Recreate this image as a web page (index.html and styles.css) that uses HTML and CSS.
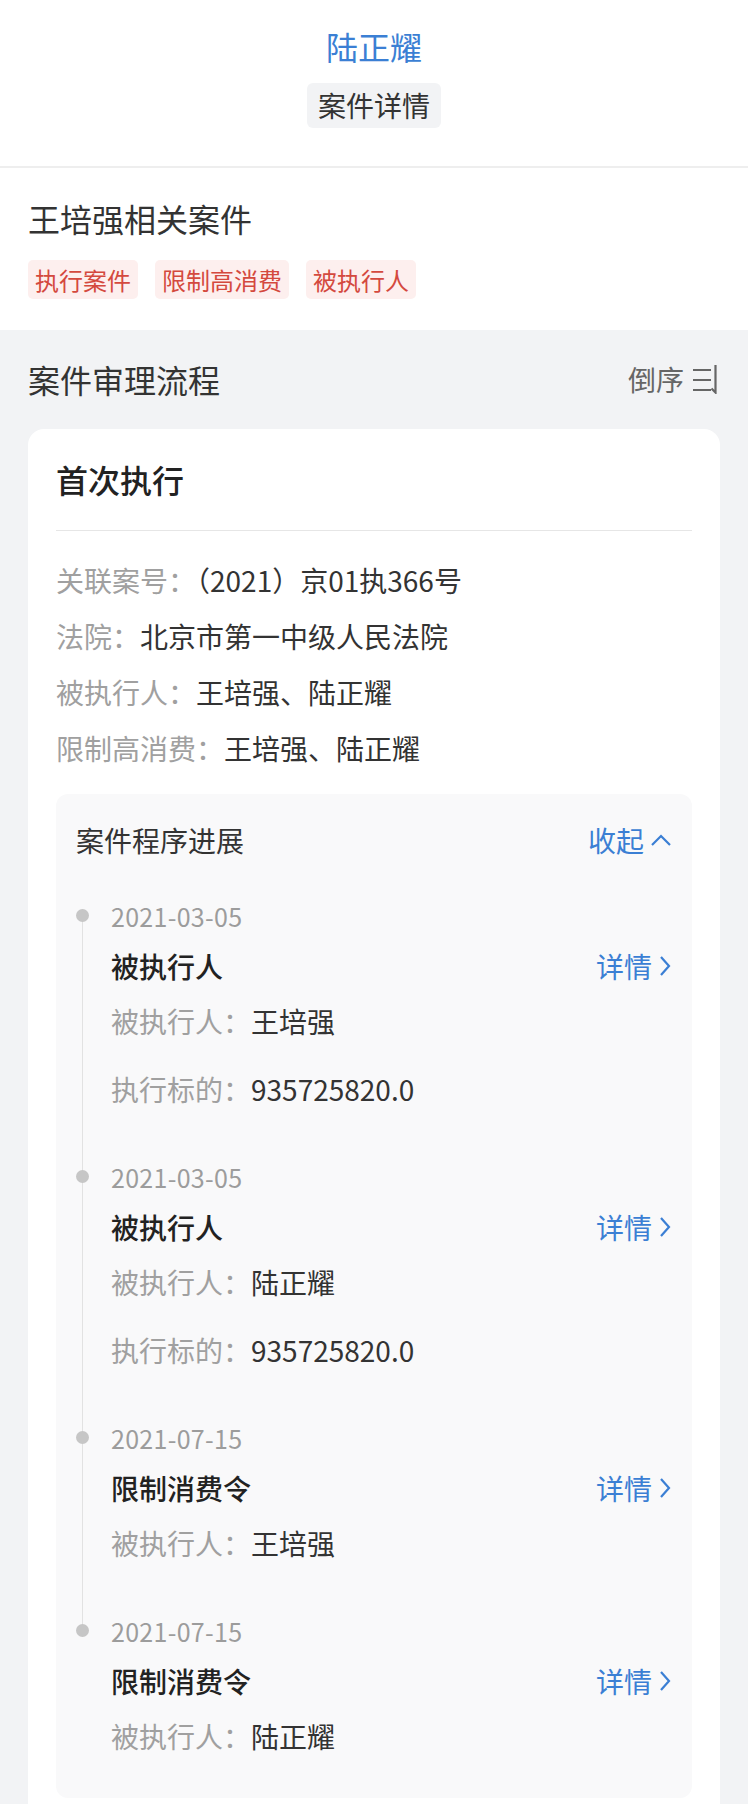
FILE: index.html
```html
<!DOCTYPE html>
<html lang="zh-CN">
<head>
<meta charset="utf-8">
<title>案件详情</title>
<link rel="stylesheet" href="styles.css">
</head>
<body>
<header class="top">
  <div class="person">陆正耀</div>
  <div class="badge">案件详情</div>
</header>

<section class="related">
  <h2 class="related-title">王培强相关案件</h2>
  <div class="tags">
    <span class="tag">执行案件</span>
    <span class="tag">限制高消费</span>
    <span class="tag">被执行人</span>
  </div>
</section>

<main class="flow">
  <div class="flow-head">
    <h2 class="flow-title">案件审理流程</h2>
    <div class="sort">
      <span>倒序</span>
      <svg class="sort-icon" viewBox="0 0 30 30" width="30" height="30" aria-hidden="true">
        <path d="M3 6H21M3 16H21M3 26H21" fill="none" stroke="#666" stroke-width="2.2"/>
        <path d="M25.5 1V28.5L21.5 24.5" fill="none" stroke="#666" stroke-width="2.2" stroke-linejoin="miter"/>
      </svg>
    </div>
  </div>

  <div class="card">
    <h3 class="card-title">首次执行</h3>
    <div class="info">
      <div class="row"><span class="label">关联案号：</span><span class="value">（2021）京01执366号</span></div>
      <div class="row"><span class="label">法院：</span><span class="value">北京市第一中级人民法院</span></div>
      <div class="row"><span class="label">被执行人：</span><span class="value">王培强、陆正耀</span></div>
      <div class="row"><span class="label">限制高消费：</span><span class="value">王培强、陆正耀</span></div>
    </div>

    <div class="progress">
      <div class="progress-head">
        <span class="progress-title">案件程序进展</span>
        <span class="toggle">收起
          <svg viewBox="0 0 22 14" width="22" height="14" aria-hidden="true"><path d="M2 12L11 3L20 12" fill="none" stroke="currentColor" stroke-width="2.2"/></svg>
        </span>
      </div>

      <ol class="timeline">
        <li class="item">
          <div class="date">2021-03-05</div>
          <div class="item-head">
            <span class="item-title">被执行人</span>
            <span class="more">详情<svg viewBox="0 0 14 24" width="14" height="24" aria-hidden="true"><path d="M3 3L11 12L3 21" fill="none" stroke="currentColor" stroke-width="2.2"/></svg></span>
          </div>
          <div class="row"><span class="label">被执行人：</span><span class="value">王培强</span></div>
          <div class="row"><span class="label">执行标的：</span><span class="value">935725820.0</span></div>
        </li>
        <li class="item">
          <div class="date">2021-03-05</div>
          <div class="item-head">
            <span class="item-title">被执行人</span>
            <span class="more">详情<svg viewBox="0 0 14 24" width="14" height="24" aria-hidden="true"><path d="M3 3L11 12L3 21" fill="none" stroke="currentColor" stroke-width="2.2"/></svg></span>
          </div>
          <div class="row"><span class="label">被执行人：</span><span class="value">陆正耀</span></div>
          <div class="row"><span class="label">执行标的：</span><span class="value">935725820.0</span></div>
        </li>
        <li class="item">
          <div class="date">2021-07-15</div>
          <div class="item-head">
            <span class="item-title">限制消费令</span>
            <span class="more">详情<svg viewBox="0 0 14 24" width="14" height="24" aria-hidden="true"><path d="M3 3L11 12L3 21" fill="none" stroke="currentColor" stroke-width="2.2"/></svg></span>
          </div>
          <div class="row"><span class="label">被执行人：</span><span class="value">王培强</span></div>
        </li>
        <li class="item">
          <div class="date">2021-07-15</div>
          <div class="item-head">
            <span class="item-title">限制消费令</span>
            <span class="more">详情<svg viewBox="0 0 14 24" width="14" height="24" aria-hidden="true"><path d="M3 3L11 12L3 21" fill="none" stroke="currentColor" stroke-width="2.2"/></svg></span>
          </div>
          <div class="row"><span class="label">被执行人：</span><span class="value">陆正耀</span></div>
        </li>
      </ol>
    </div>
  </div>
</main>
</body>
</html>
```

FILE: styles.css
```css
* {
  box-sizing: border-box;
}

html, body {
  margin: 0;
  padding: 0;
}

body {
  background: #f2f3f5;
  font-family: "Noto Sans CJK SC", "Noto Sans", sans-serif;
  color: #333;
}

h2, h3 {
  margin: 0;
  font-weight: normal;
}

/* header */
.top {
  background: #fff;
  display: flex;
  flex-direction: column;
  align-items: center;
  padding: 24px 0 38px;
  border-bottom: 2px solid #eeeeee;
}

.person {
  font-size: 32px;
  line-height: 44px;
  color: #3b7fd4;
}

.badge {
  margin-top: 15px;
  height: 45px;
  line-height: 45px;
  padding: 0 11px;
  font-size: 28px;
  color: #333;
  background: #f2f3f5;
  border-radius: 6px;
}

/* related */
.related {
  background: #fff;
  padding: 28px 28px 31px;
}

.related-title {
  font-size: 32px;
  line-height: 44px;
  color: #333;
}

.tags {
  display: flex;
  gap: 17px;
  margin-top: 20px;
}

.tag {
  font-size: 24px;
  line-height: 39px;
  padding: 0 7px;
  color: #d4493e;
  background: #fdefee;
  border-radius: 5px;
}

/* flow */
.flow {
  padding: 27px 28px 0;
}

.flow-head {
  display: flex;
  justify-content: space-between;
  align-items: center;
  height: 44px;
}

.flow-title {
  font-size: 32px;
  line-height: 44px;
  color: #333;
}

.sort {
  display: flex;
  align-items: center;
  gap: 6px;
  font-size: 28px;
  line-height: 44px;
  color: #666;
}

.sort-icon {
  display: block;
}

.card {
  margin-top: 28px;
  background: #fff;
  border-radius: 16px;
  padding: 28px 28px 28px;
}

.card-title {
  font-size: 32px;
  line-height: 44px;
  font-weight: 500;
  color: #222;
  padding-bottom: 29px;
  border-bottom: 1px solid #e6e6e6;
}

.info {
  padding-top: 21px;
}

.row {
  font-size: 28px;
  line-height: 56px;
  white-space: nowrap;
}

.label {
  color: #a0a0a0;
}

.value {
  color: #333;
}

/* progress */
.progress {
  margin-top: 18px;
  background: #f9f9fa;
  border-radius: 12px;
  padding: 26px 20px 3px;
}

.progress-head {
  display: flex;
  justify-content: space-between;
  align-items: center;
  font-size: 28px;
  line-height: 40px;
  margin-bottom: 27px;
}

.progress-title {
  color: #333;
}

.toggle {
  display: flex;
  align-items: center;
  gap: 6px;
  color: #3b7fd4;
}

.toggle svg {
  display: block;
}

.timeline {
  list-style: none;
  margin: 0;
  padding: 0;
}

.item {
  position: relative;
  padding: 0 0 25px 35px;
}

.item::before {
  content: "";
  position: absolute;
  left: 6px;
  top: 29px;
  bottom: -29px;
  width: 1px;
  background: #e2e2e2;
}

.item:last-child::before {
  display: none;
}

.item::after {
  content: "";
  position: absolute;
  left: 0;
  top: 22px;
  width: 13px;
  height: 13px;
  border-radius: 50%;
  background: #c6c6c6;
}

.date {
  font-size: 25px;
  line-height: 58px;
  color: #9c9c9c;
  letter-spacing: 0.3px;
}

.item-head {
  display: flex;
  justify-content: space-between;
  align-items: center;
  height: 42px;
}

.item-title {
  font-size: 28px;
  line-height: 42px;
  font-weight: 500;
  color: #222;
}

.more {
  display: flex;
  align-items: center;
  gap: 6px;
  font-size: 28px;
  line-height: 42px;
  color: #3b7fd4;
}

.more svg {
  display: block;
}

.item .row {
  line-height: 68px;
}
```
